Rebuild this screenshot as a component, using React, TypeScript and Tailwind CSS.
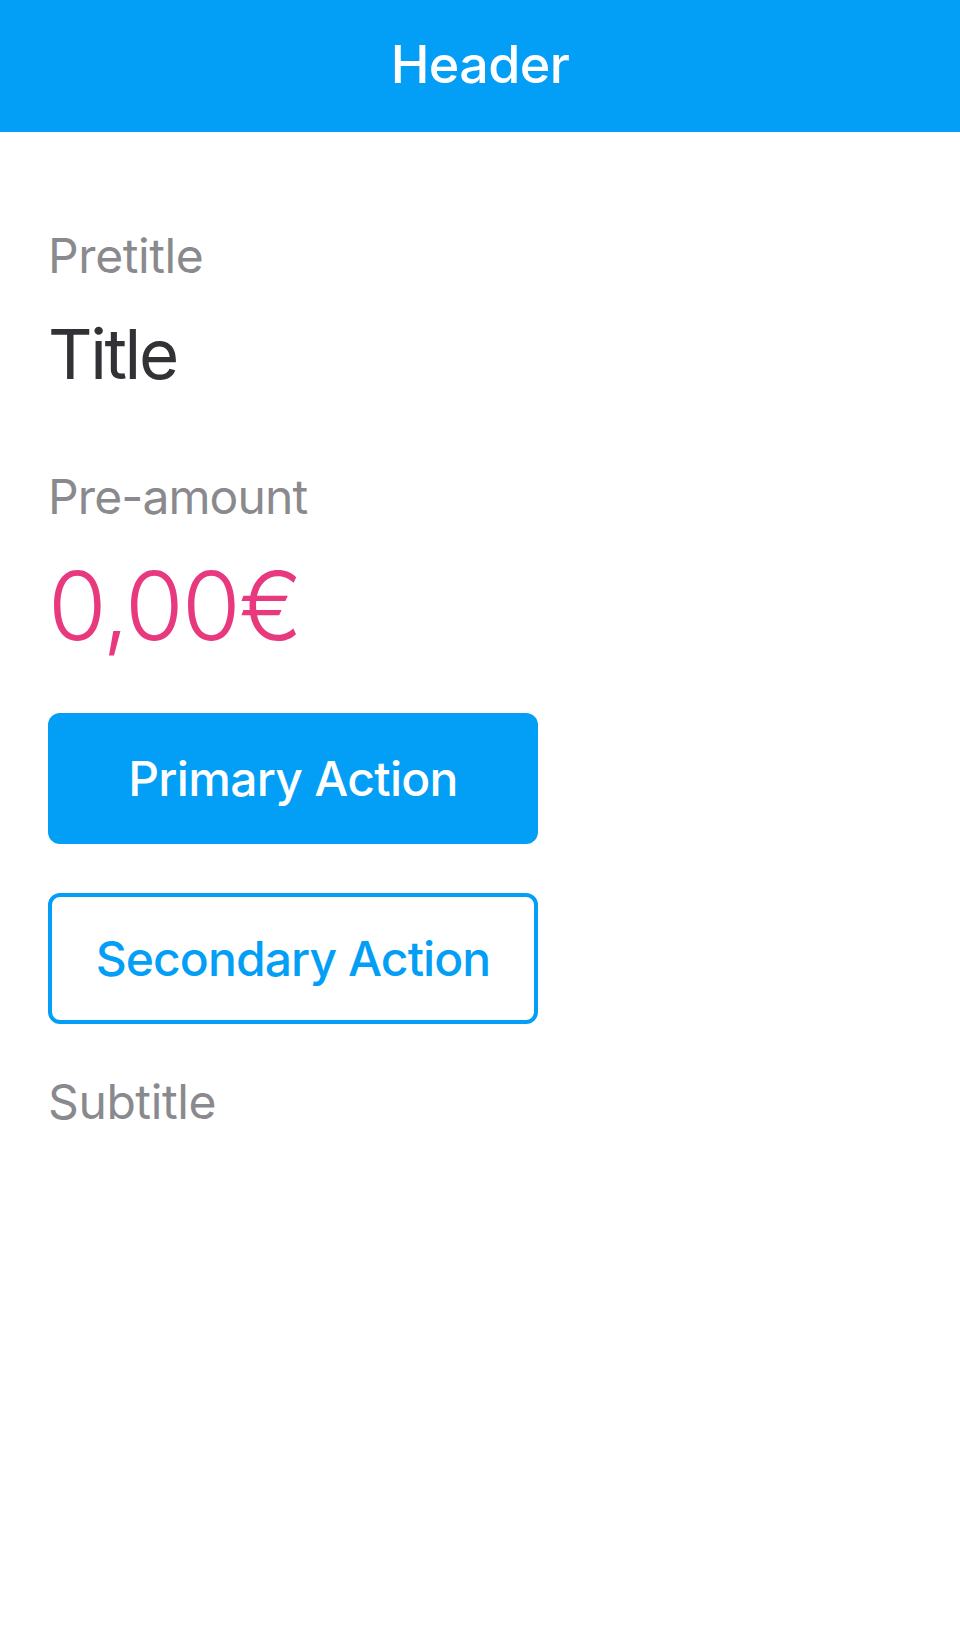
import React from 'react'

const BLUE = 'bg-[#039ef5]'

function Label({ children, className = 'tracking-[-0.4px]' }: { children: React.ReactNode; className?: string }) {
  return (
    <p className={`text-[48px] leading-[56px] text-[#8a8a8e] ${className}`}>
      {children}
    </p>
  )
}

export default function App() {
  return (
    <div className="min-h-[1644px] bg-white font-['Inter',sans-serif]">
      <header className={`${BLUE} h-[132px] flex items-center justify-center pb-[3px]`}>
        <h1 className="text-[52px] leading-none font-medium tracking-[-0.6px] text-white">Header</h1>
      </header>

      <main className="px-12 pt-[96px]">
        <Label>Pretitle</Label>
        <h2 className="mt-[30px] text-[69px] leading-[80px] tracking-[-2.4px] text-[#323236]">Title</h2>

        <Label className="mt-[75px] tracking-[-0.9px]">Pre-amount</Label>
        <div className="mt-[31px] text-[95px] leading-[100px] font-light tracking-[-1.8px] text-[#e8397e]">
          0,00€
        </div>

        <button
          type="button"
          className={`mt-[57px] flex h-[131px] w-[490px] items-center justify-center rounded-[12px] ${BLUE} text-[48px] font-medium tracking-[-0.7px] text-white`}
        >
          Primary Action
        </button>

        <button
          type="button"
          className="mt-[49px] flex h-[131px] w-[490px] items-center justify-center rounded-[12px] border-[4px] border-[#039ef5] bg-white text-[48px] font-medium tracking-[-0.9px] text-[#039ef5]"
        >
          Secondary Action
        </button>

        <Label className="mt-[50px] tracking-[-0.4px]">Subtitle</Label>
      </main>
    </div>
  )
}
